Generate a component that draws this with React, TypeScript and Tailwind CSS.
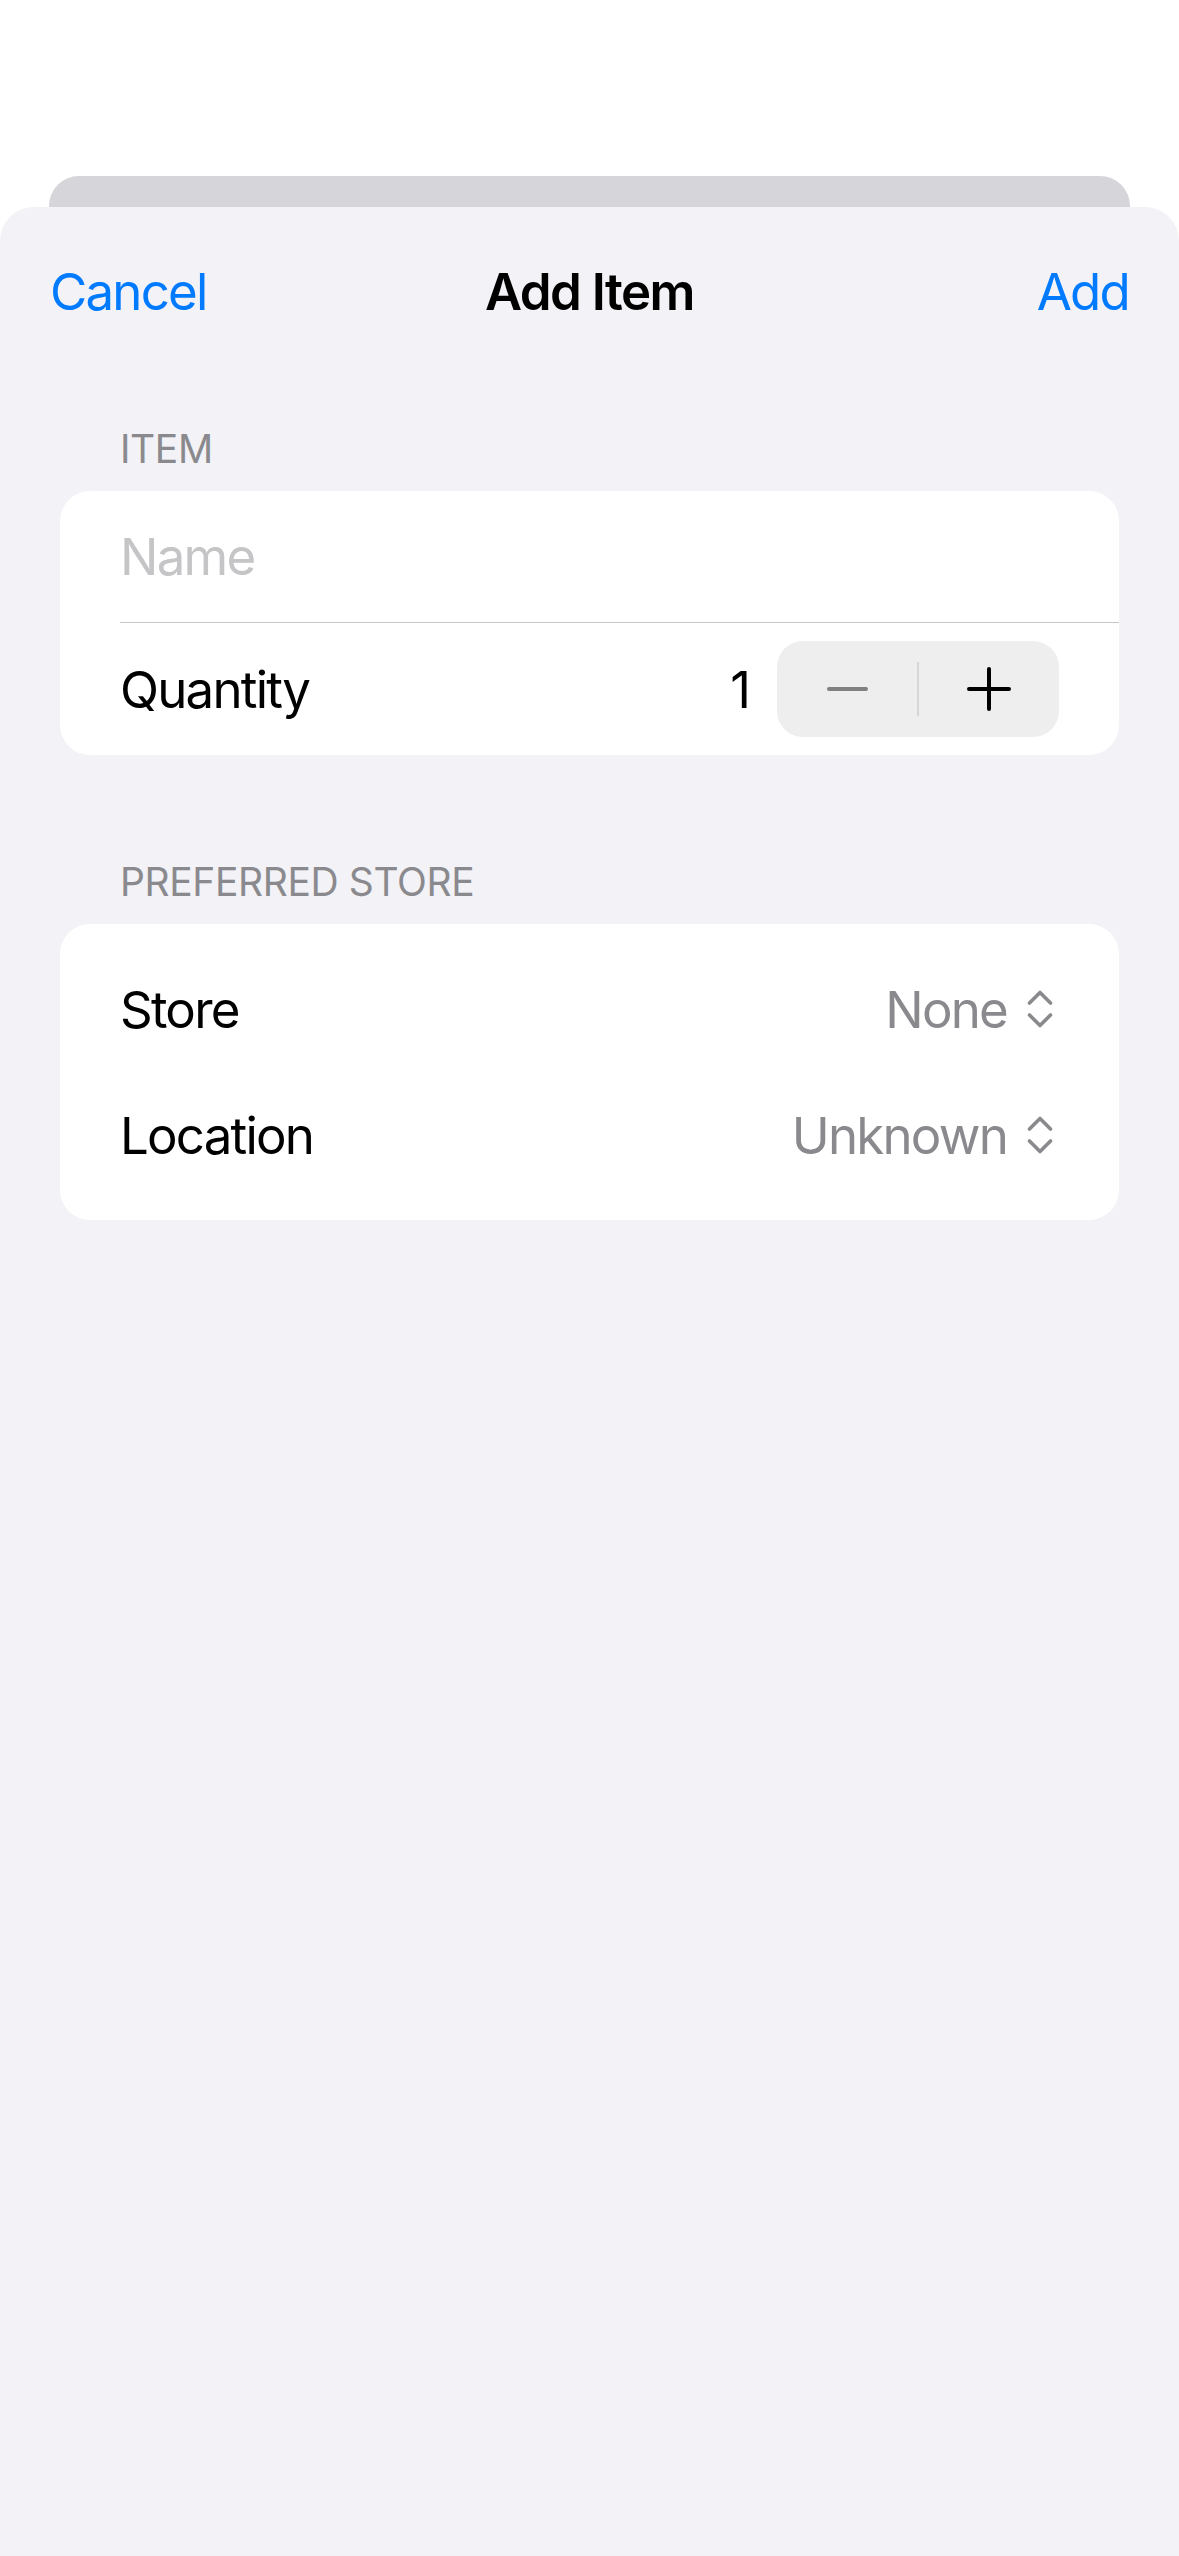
import React from "react";

const font = { fontFamily: "Inter, 'Noto Sans', sans-serif" };

function UpDown() {
  return (
    <svg width="26" height="38" viewBox="0 0 26 38" fill="none" className="shrink-0">
      <path d="M2.5 13 L13 2.5 L23.5 13" stroke="#8A8A8E" strokeWidth="3.6" strokeLinecap="round" strokeLinejoin="round" />
      <path d="M2.5 25 L13 35.5 L23.5 25" stroke="#8A8A8E" strokeWidth="3.6" strokeLinecap="round" strokeLinejoin="round" />
    </svg>
  );
}

function Stepper() {
  return (
    <div className="flex h-[96px] w-[282px] items-center rounded-[26px] bg-[#EEEEEF]">
      <div className="flex flex-1 items-center justify-center">
        <div className="h-[4px] w-[41px] rounded-full bg-[#808080]" />
      </div>
      <div className="h-[54px] w-[2px] bg-[#D6D6D8]" />
      <div className="flex flex-1 items-center justify-center">
        <svg width="44" height="44" viewBox="0 0 44 44">
          <path d="M2 22 H42 M22 2 V42" stroke="#000" strokeWidth="4" strokeLinecap="round" />
        </svg>
      </div>
    </div>
  );
}

function PickerRow({ label, value }: { label: string; value: string }) {
  return (
    <div className="flex h-[126px] items-center justify-between pl-[60px] pr-[66px]">
      <span className="text-[51px] leading-none text-black tracking-[-0.035em]">{label}</span>
      <div className="flex items-center gap-[20px]">
        <span className="text-[51px] leading-none text-[#8A8A8E] tracking-[-0.035em]">{value}</span>
        <UpDown />
      </div>
    </div>
  );
}

export default function App() {
  return (
    <div className="flex h-[2556px] w-[1179px] flex-col overflow-hidden bg-white" style={font}>
      <div className="h-[176px] shrink-0" />
      <div className="mx-[49px] h-[31px] shrink-0 rounded-t-[30px] bg-[#D5D5DA]" />
      <div className="flex flex-1 flex-col rounded-t-[34px] bg-[#F2F2F7]">
        {/* Nav bar */}
        <div className="grid h-[168px] grid-cols-3 items-center px-[50px]">
          <span className="justify-self-start text-[51px] leading-none text-[#007AFF] tracking-[-0.035em]">Cancel</span>
          <span className="justify-self-center whitespace-nowrap text-[51px] font-semibold leading-none text-black tracking-[-0.03em]">
            Add Item
          </span>
          <span className="justify-self-end text-[51px] leading-none text-[#007AFF] tracking-[-0.035em]">Add</span>
        </div>

        <div className="flex flex-col px-[60px]">
          {/* Section 1 */}
          <div className="mt-[51px] h-[46px] px-[60px] text-[39px] leading-[46px] text-[#8A8A8E] tracking-[-0.01em]">ITEM</div>
          <div className="mt-[19px] flex flex-col rounded-[30px] bg-white">
            <div className="flex h-[131px] items-center px-[60px]">
              <span className="text-[51px] leading-none text-[#C5C5C7] tracking-[-0.035em]">Name</span>
            </div>
            <div className="ml-[60px] h-px bg-[#C6C6C8]" />
            <div className="flex h-[132px] items-center justify-between pl-[60px] pr-[60px]">
              <span className="text-[51px] leading-none text-black tracking-[-0.035em]">Quantity</span>
              <div className="flex items-center gap-[26px]">
                <span className="text-[51px] leading-none text-black">1</span>
                <Stepper />
              </div>
            </div>
          </div>

          {/* Section 2 */}
          <div className="mt-[104px] h-[46px] px-[60px] text-[39px] leading-[46px] text-[#8A8A8E] tracking-[-0.01em]">PREFERRED STORE</div>
          <div className="mt-[19px] flex flex-col rounded-[30px] bg-white py-[22px]">
            <PickerRow label="Store" value="None" />
            <PickerRow label="Location" value="Unknown" />
          </div>
        </div>
      </div>
    </div>
  );
}
